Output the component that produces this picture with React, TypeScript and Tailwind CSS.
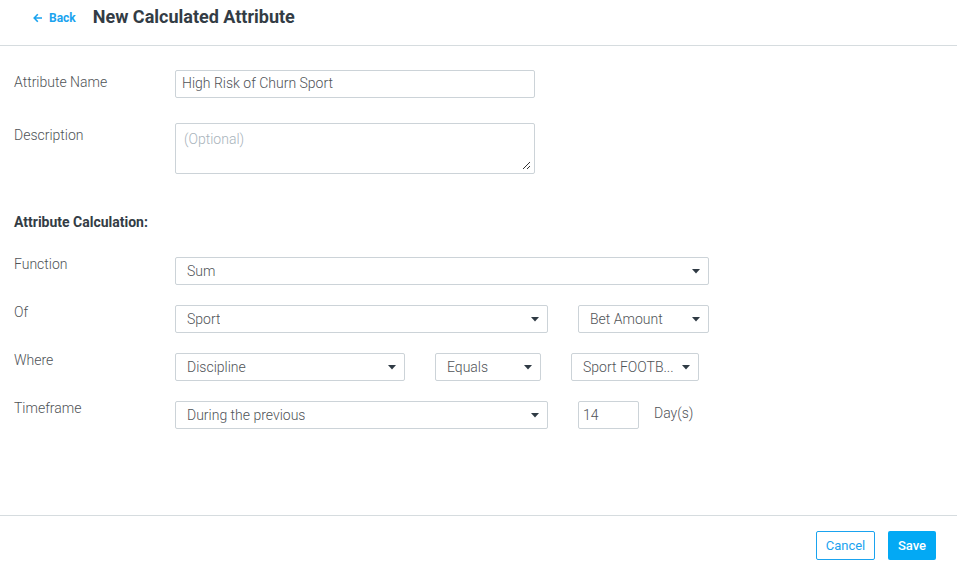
import React from 'react';

function Caret() {
  return (
    <svg width="8" height="5" viewBox="0 0 8 5" className="shrink-0">
      <path d="M0 0h8L4 4.5z" fill="#2f3a44" />
    </svg>
  );
}

function Select({ value, width }: { value: string; width: string }) {
  return (
    <div className={`${width} h-[28px] flex items-center justify-between pl-[11px] pr-[8px] border border-[#ccd3d8] rounded-[2px] bg-white`}>
      <span className="text-[14px] font-light text-[#4f5357] truncate">{value}</span>
      <Caret />
    </div>
  );
}

function Row({ label, children }: { label: string; children: React.ReactNode }) {
  return (
    <div className="flex items-start">
      <div className="w-[161px] text-[14px] leading-[15px] font-light text-[#4f5357]">{label}</div>
      <div className="flex items-center">{children}</div>
    </div>
  );
}

export default function App() {
  return (
    <div className="w-[957px] h-[568px] flex flex-col bg-white" style={{ fontFamily: 'Roboto, "Liberation Sans", sans-serif' }}>
      {/* Header */}
      <div className="h-[46px] flex items-start border-b border-[#d6dcdf] pl-[33px] pt-[6px]">
        <a className="flex items-center gap-[7px] text-[12px] leading-[22px] mt-[1px] font-bold text-[#1aa3ef]">
          <svg width="9" height="10" viewBox="0 0 9 10" fill="none" stroke="#1aa3ef" strokeWidth="1.6">
            <path d="M9 5H1.2M4.8 1.2L1.2 5 4.8 8.8" />
          </svg>
          Back
        </a>
        <h1 className="ml-[17px] text-[18px] leading-[22px] font-bold text-[#333c45]">New Calculated Attribute</h1>
      </div>

      {/* Form */}
      <div className="flex-1 px-[14px] pt-[24px]">
        <div className="flex items-start">
          <div className="w-[161px] pt-[5px] text-[14px] leading-[15px] font-light text-[#4f5357]">Attribute Name</div>
          <div className="w-[360px] h-[28px] flex items-center px-[6px] pb-[1px] border border-[#ccd3d8] rounded-[2px] text-[14px] font-light text-[#4f5357]">
            High Risk of Churn Sport
          </div>
        </div>
        <div className="flex items-start mt-[25px]">
          <div className="w-[161px] pt-[5px] text-[14px] leading-[15px] font-light text-[#4f5357]">Description</div>
          <div className="relative w-[360px] h-[51px] px-[8px] pt-[5px] border border-[#ccd3d8] rounded-[2px] text-[14px] font-light text-[#a8b3bb]">
            (Optional)
            <svg width="9" height="9" viewBox="0 0 9 9" className="absolute right-[3px] bottom-[3px]" stroke="#333" strokeWidth="1">
              <path d="M1 8L8 1M5 8L8 5" />
            </svg>
          </div>
        </div>

        <div className="mt-[40px] text-[14px] leading-[16px] font-bold text-[#333c45]">Attribute Calculation:</div>

        <div className="mt-[27px] flex flex-col gap-[20px]">
          <Row label="Function">
            <Select value="Sum" width="w-[534px]" />
          </Row>
          <Row label="Of">
            <Select value="Sport" width="w-[373px]" />
            <div className="ml-[30px]"><Select value="Bet Amount" width="w-[131px]" /></div>
          </Row>
          <Row label="Where">
            <Select value="Discipline" width="w-[230px]" />
            <div className="ml-[30px]"><Select value="Equals" width="w-[106px]" /></div>
            <div className="ml-[30px]"><Select value="Sport FOOTB..." width="w-[128px]" /></div>
          </Row>
          <Row label="Timeframe">
            <Select value="During the previous" width="w-[373px]" />
            <div className="ml-[30px] w-[61px] h-[28px] flex items-center px-[4px] border border-[#ccd3d8] rounded-[2px] text-[14px] font-light text-[#4f5357]">14</div>
            <span className="ml-[15px] text-[14px] font-light text-[#4f5357] -mt-[4px]">Day(s)</span>
          </Row>
        </div>
      </div>

      {/* Footer */}
      <div className="h-[53px] border-t border-[#d6dcdf] flex items-start justify-end gap-[13px] pt-[15px] pr-[21px]">
        <button className="w-[59px] h-[29px] border border-[#1aa3ef] rounded-[2px] text-[13px] text-[#1aa3ef] bg-white">Cancel</button>
        <button className="w-[48px] h-[29px] rounded-[2px] text-[13px] font-medium text-white bg-[#03a9f4]">Save</button>
      </div>
    </div>
  );
}
